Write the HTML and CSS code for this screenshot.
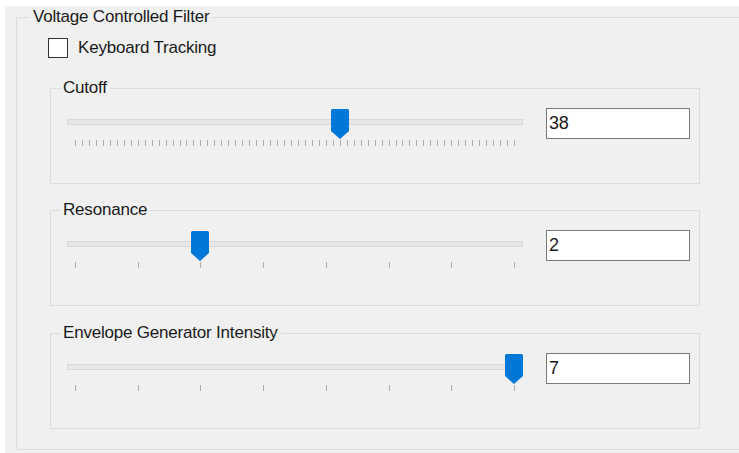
FILE: index.html
```html
<!DOCTYPE html>
<html lang="en">
<head>
<meta charset="utf-8">
<title>Voltage Controlled Filter</title>
<link rel="stylesheet" href="styles.css">
</head>
<body>
<div class="window">
  <fieldset class="group outer">
    <legend>Voltage Controlled Filter</legend>
    <label class="check"><span class="check-box"></span>Keyboard Tracking</label>

    <fieldset class="group inner first">
      <legend>Cutoff</legend>
      <div class="row">
        <div class="slider">
          <div class="track"></div>
          <svg class="thumb" style="left: 264px" width="18" height="30" viewBox="0 0 18 30"><path d="M1.5 0H16.5A1.5 1.5 0 0 1 18 1.5V22L9 30L0 22V1.5A1.5 1.5 0 0 1 1.5 0Z"/></svg>
          <div class="ticks fine"></div>
        </div>
        <input class="num" type="text" value="38">
      </div>
    </fieldset>

    <fieldset class="group inner">
      <legend>Resonance</legend>
      <div class="row">
        <div class="slider">
          <div class="track"></div>
          <svg class="thumb" style="left: 124px" width="18" height="30" viewBox="0 0 18 30"><path d="M1.5 0H16.5A1.5 1.5 0 0 1 18 1.5V22L9 30L0 22V1.5A1.5 1.5 0 0 1 1.5 0Z"/></svg>
          <div class="ticks coarse"></div>
        </div>
        <input class="num" type="text" value="2">
      </div>
    </fieldset>

    <fieldset class="group inner last">
      <legend>Envelope Generator Intensity</legend>
      <div class="row">
        <div class="slider">
          <div class="track"></div>
          <svg class="thumb" style="left: 438px" width="18" height="30" viewBox="0 0 18 30"><path d="M1.5 0H16.5A1.5 1.5 0 0 1 18 1.5V22L9 30L0 22V1.5A1.5 1.5 0 0 1 1.5 0Z"/></svg>
          <div class="ticks coarse"></div>
        </div>
        <input class="num" type="text" value="7">
      </div>
    </fieldset>
  </fieldset>
</div>
</body>
</html>
```
FILE: styles.css
```css
html, body {
  margin: 0;
  background: #ffffff;
  overflow: hidden;
}

body {
  font-family: "Liberation Sans", Arial, sans-serif;
  font-size: 17px;
  letter-spacing: -0.2px;
  color: #1a1a1a;
}

.window {
  margin: 6px 0 0 5px;
  padding-top: 1px;
  height: 447px;
  background: #f0f0f0;
  overflow: hidden;
}

/* group boxes */
.group {
  margin: 0;
  border: 1px solid #dcdcdc;
  box-sizing: border-box;
  min-inline-size: 0;
}

.group legend {
  padding: 0 3px;
  line-height: 20px;
}

/* the outer box runs past the right edge of the window */
.outer {
  margin: 0 -60px 0 11px;
  padding: 0 0 20px 31px;
}

.outer > legend {
  margin-left: -18px;
}

.inner {
  width: 650px;
  margin: 16px 0 0 2px;
  padding: 0 0 32px 16px;
}

.inner.first {
  margin-top: 20px;
}

.inner.last {
  margin-top: 17px;
}

.inner > legend {
  margin-left: -7px;
}

/* checkbox */
.check {
  display: flex;
  align-items: center;
  gap: 10px;
  margin-top: 11px;
  line-height: 20px;
}

.check-box {
  width: 18px;
  height: 18px;
  border: 1px solid #333333;
  background: #ffffff;
}

/* slider rows */
.row {
  display: flex;
  align-items: flex-start;
  gap: 23px;
  margin-top: 10px;
}

.slider {
  position: relative;
  width: 456px;
  height: 42px;
  margin-top: 1px;
}

.track {
  margin-top: 10px;
  height: 4px;
  background: #e7e7e7;
  border: 1px solid #d8d8d8;
}

.thumb {
  position: absolute;
  top: 0;
  fill: #0078d7;
}

.ticks {
  width: 440px;
  height: 6px;
  margin: 15px 0 0 8px;
}

.ticks.fine {
  background: repeating-linear-gradient(to right, #adadad 0 1px, transparent 1px 6.968px);
}

.ticks.coarse {
  background: repeating-linear-gradient(to right, #adadad 0 1px, transparent 1px 62.71px);
}

.num {
  box-sizing: border-box;
  width: 144px;
  height: 31px;
  margin: 0;
  padding: 0 2px;
  border: 1px solid #7a7a7a;
  background: #ffffff;
  font: inherit;
  font-size: 18px;
  letter-spacing: -0.3px;
  color: #1a1a1a;
  outline: none;
}
```
